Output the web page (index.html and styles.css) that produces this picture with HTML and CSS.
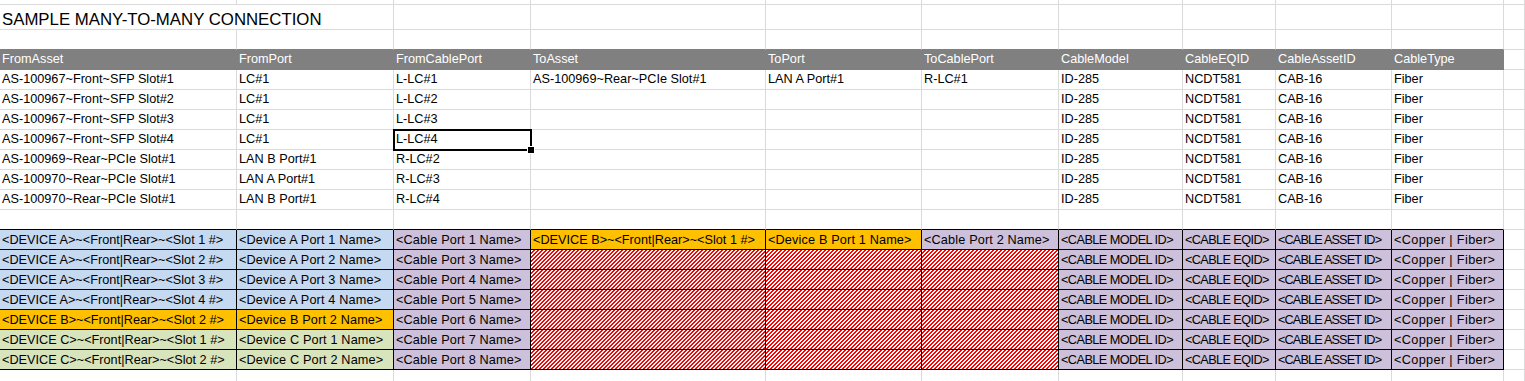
FILE: index.html
```html
<!DOCTYPE html>
<html>
<head>
<meta charset="utf-8">
<title>Sample many-to-many connection</title>
<link rel="stylesheet" href="styles.css">
</head>
<body>
<svg class="defs" width="0" height="0" aria-hidden="true">
  <defs>
    <pattern id="hp" width="4" height="4" patternUnits="userSpaceOnUse">
      <path d="M2 0h2v1H2z M1 1h2v1H1z M0 2h2v1H0z M0 3h1v1H0z M3 3h1v1H3z" fill="#ff0000"/>
    </pattern>
  </defs>
</svg>
<div class="sheet">
  <div class="row r0"><div class="c"></div><div class="c"></div><div class="c"></div><div class="c"></div><div class="c"></div><div class="c"></div><div class="c"></div><div class="c"></div><div class="c"></div><div class="c"></div><div class="c"></div></div>
  <div class="row rt"><div class="c title">SAMPLE MANY-TO-MANY CONNECTION</div><div class="c"></div><div class="c"></div><div class="c"></div><div class="c"></div><div class="c"></div><div class="c"></div><div class="c"></div><div class="c"></div><div class="c"></div></div>
  <div class="row"><div class="c gt"></div><div class="c gt"></div><div class="c gt"></div><div class="c gt"></div><div class="c gt"></div><div class="c gt"></div><div class="c gt"></div><div class="c gt"></div><div class="c gt"></div><div class="c gt"></div><div class="c"></div></div>
  <div class="row">
    <div class="c h">FromAsset</div><div class="c h">FromPort</div><div class="c h">FromCablePort</div><div class="c h">ToAsset</div><div class="c h">ToPort</div><div class="c h">ToCablePort</div><div class="c h">CableModel</div><div class="c h">CableEQID</div><div class="c h">CableAssetID</div><div class="c h">CableType</div><div class="c"></div>
  </div>
  <div class="row">
    <div class="c">AS-100967~Front~SFP Slot#1</div><div class="c">LC#1</div><div class="c">L-LC#1</div><div class="c">AS-100969~Rear~PCIe Slot#1</div><div class="c">LAN A Port#1</div><div class="c">R-LC#1</div><div class="c">ID-285</div><div class="c">NCDT581</div><div class="c">CAB-16</div><div class="c">Fiber</div><div class="c"></div>
  </div>
  <div class="row">
    <div class="c">AS-100967~Front~SFP Slot#2</div><div class="c">LC#1</div><div class="c">L-LC#2</div><div class="c"></div><div class="c"></div><div class="c"></div><div class="c">ID-285</div><div class="c">NCDT581</div><div class="c">CAB-16</div><div class="c">Fiber</div><div class="c"></div>
  </div>
  <div class="row">
    <div class="c">AS-100967~Front~SFP Slot#3</div><div class="c">LC#1</div><div class="c">L-LC#3</div><div class="c"></div><div class="c"></div><div class="c"></div><div class="c">ID-285</div><div class="c">NCDT581</div><div class="c">CAB-16</div><div class="c">Fiber</div><div class="c"></div>
  </div>
  <div class="row">
    <div class="c">AS-100967~Front~SFP Slot#4</div><div class="c">LC#1</div><div class="c sel">L-LC#4<span class="selbox"><span class="handle"></span></span></div><div class="c"></div><div class="c"></div><div class="c"></div><div class="c">ID-285</div><div class="c">NCDT581</div><div class="c">CAB-16</div><div class="c">Fiber</div><div class="c"></div>
  </div>
  <div class="row">
    <div class="c">AS-100969~Rear~PCIe Slot#1</div><div class="c">LAN B Port#1</div><div class="c">R-LC#2</div><div class="c"></div><div class="c"></div><div class="c"></div><div class="c">ID-285</div><div class="c">NCDT581</div><div class="c">CAB-16</div><div class="c">Fiber</div><div class="c"></div>
  </div>
  <div class="row">
    <div class="c">AS-100970~Rear~PCIe Slot#1</div><div class="c">LAN A Port#1</div><div class="c">R-LC#3</div><div class="c"></div><div class="c"></div><div class="c"></div><div class="c">ID-285</div><div class="c">NCDT581</div><div class="c">CAB-16</div><div class="c">Fiber</div><div class="c"></div>
  </div>
  <div class="row">
    <div class="c">AS-100970~Rear~PCIe Slot#1</div><div class="c">LAN B Port#1</div><div class="c">R-LC#4</div><div class="c"></div><div class="c"></div><div class="c"></div><div class="c">ID-285</div><div class="c">NCDT581</div><div class="c">CAB-16</div><div class="c">Fiber</div><div class="c"></div>
  </div>
  <div class="row"><div class="c bt"></div><div class="c bt"></div><div class="c bt"></div><div class="c bt"></div><div class="c bt"></div><div class="c bt"></div><div class="c bt"></div><div class="c bt"></div><div class="c bt"></div><div class="c bt"></div><div class="c"></div></div>
  <div class="row">
    <div class="c bx blue">&lt;DEVICE A&gt;~&lt;Front|Rear&gt;~&lt;Slot 1 #&gt;</div><div class="c bx blue lw">&lt;Device A Port 1 Name&gt;</div><div class="c bx pur lw">&lt;Cable Port 1 Name&gt;</div><div class="c bx yel">&lt;DEVICE B&gt;~&lt;Front|Rear&gt;~&lt;Slot 1 #&gt;</div><div class="c bx yel lw">&lt;Device B Port 1 Name&gt;</div><div class="c bx pur lw">&lt;Cable Port 2 Name&gt;</div><div class="c bx pur lsm">&lt;CABLE MODEL ID&gt;</div><div class="c bx pur lse">&lt;CABLE EQID&gt;</div><div class="c bx pur lsa">&lt;CABLE ASSET ID&gt;</div><div class="c bx pur lsc">&lt;Copper | Fiber&gt;</div><div class="c"></div>
  </div>
  <div class="row">
    <div class="c bx blue">&lt;DEVICE A&gt;~&lt;Front|Rear&gt;~&lt;Slot 2 #&gt;</div><div class="c bx blue lw">&lt;Device A Port 2 Name&gt;</div><div class="c bx pur lw">&lt;Cable Port 3 Name&gt;</div><div class="c bx hatch"><svg class="hs"><rect width="100%" height="100%" fill="url(#hp)"/></svg></div><div class="c bx hatch"><svg class="hs"><rect width="100%" height="100%" fill="url(#hp)"/></svg></div><div class="c bx hatch"><svg class="hs"><rect width="100%" height="100%" fill="url(#hp)"/></svg></div><div class="c bx pur lsm">&lt;CABLE MODEL ID&gt;</div><div class="c bx pur lse">&lt;CABLE EQID&gt;</div><div class="c bx pur lsa">&lt;CABLE ASSET ID&gt;</div><div class="c bx pur lsc">&lt;Copper | Fiber&gt;</div><div class="c"></div>
  </div>
  <div class="row">
    <div class="c bx blue">&lt;DEVICE A&gt;~&lt;Front|Rear&gt;~&lt;Slot 3 #&gt;</div><div class="c bx blue lw">&lt;Device A Port 3 Name&gt;</div><div class="c bx pur lw">&lt;Cable Port 4 Name&gt;</div><div class="c bx hatch"><svg class="hs"><rect width="100%" height="100%" fill="url(#hp)"/></svg></div><div class="c bx hatch"><svg class="hs"><rect width="100%" height="100%" fill="url(#hp)"/></svg></div><div class="c bx hatch"><svg class="hs"><rect width="100%" height="100%" fill="url(#hp)"/></svg></div><div class="c bx pur lsm">&lt;CABLE MODEL ID&gt;</div><div class="c bx pur lse">&lt;CABLE EQID&gt;</div><div class="c bx pur lsa">&lt;CABLE ASSET ID&gt;</div><div class="c bx pur lsc">&lt;Copper | Fiber&gt;</div><div class="c"></div>
  </div>
  <div class="row">
    <div class="c bx blue">&lt;DEVICE A&gt;~&lt;Front|Rear&gt;~&lt;Slot 4 #&gt;</div><div class="c bx blue lw">&lt;Device A Port 4 Name&gt;</div><div class="c bx pur lw">&lt;Cable Port 5 Name&gt;</div><div class="c bx hatch"><svg class="hs"><rect width="100%" height="100%" fill="url(#hp)"/></svg></div><div class="c bx hatch"><svg class="hs"><rect width="100%" height="100%" fill="url(#hp)"/></svg></div><div class="c bx hatch"><svg class="hs"><rect width="100%" height="100%" fill="url(#hp)"/></svg></div><div class="c bx pur lsm">&lt;CABLE MODEL ID&gt;</div><div class="c bx pur lse">&lt;CABLE EQID&gt;</div><div class="c bx pur lsa">&lt;CABLE ASSET ID&gt;</div><div class="c bx pur lsc">&lt;Copper | Fiber&gt;</div><div class="c"></div>
  </div>
  <div class="row">
    <div class="c bx yel">&lt;DEVICE B&gt;~&lt;Front|Rear&gt;~&lt;Slot 2 #&gt;</div><div class="c bx yel lw">&lt;Device B Port 2 Name&gt;</div><div class="c bx pur lw">&lt;Cable Port 6 Name&gt;</div><div class="c bx hatch"><svg class="hs"><rect width="100%" height="100%" fill="url(#hp)"/></svg></div><div class="c bx hatch"><svg class="hs"><rect width="100%" height="100%" fill="url(#hp)"/></svg></div><div class="c bx hatch"><svg class="hs"><rect width="100%" height="100%" fill="url(#hp)"/></svg></div><div class="c bx pur lsm">&lt;CABLE MODEL ID&gt;</div><div class="c bx pur lse">&lt;CABLE EQID&gt;</div><div class="c bx pur lsa">&lt;CABLE ASSET ID&gt;</div><div class="c bx pur lsc">&lt;Copper | Fiber&gt;</div><div class="c"></div>
  </div>
  <div class="row">
    <div class="c bx grn">&lt;DEVICE C&gt;~&lt;Front|Rear&gt;~&lt;Slot 1 #&gt;</div><div class="c bx grn lw">&lt;Device C Port 1 Name&gt;</div><div class="c bx pur lw">&lt;Cable Port 7 Name&gt;</div><div class="c bx hatch"><svg class="hs"><rect width="100%" height="100%" fill="url(#hp)"/></svg></div><div class="c bx hatch"><svg class="hs"><rect width="100%" height="100%" fill="url(#hp)"/></svg></div><div class="c bx hatch"><svg class="hs"><rect width="100%" height="100%" fill="url(#hp)"/></svg></div><div class="c bx pur lsm">&lt;CABLE MODEL ID&gt;</div><div class="c bx pur lse">&lt;CABLE EQID&gt;</div><div class="c bx pur lsa">&lt;CABLE ASSET ID&gt;</div><div class="c bx pur lsc">&lt;Copper | Fiber&gt;</div><div class="c"></div>
  </div>
  <div class="row">
    <div class="c bx grn">&lt;DEVICE C&gt;~&lt;Front|Rear&gt;~&lt;Slot 2 #&gt;</div><div class="c bx grn lw">&lt;Device C Port 2 Name&gt;</div><div class="c bx pur lw">&lt;Cable Port 8 Name&gt;</div><div class="c bx hatch"><svg class="hs"><rect width="100%" height="100%" fill="url(#hp)"/></svg></div><div class="c bx hatch"><svg class="hs"><rect width="100%" height="100%" fill="url(#hp)"/></svg></div><div class="c bx hatch"><svg class="hs"><rect width="100%" height="100%" fill="url(#hp)"/></svg></div><div class="c bx pur lsm">&lt;CABLE MODEL ID&gt;</div><div class="c bx pur lse">&lt;CABLE EQID&gt;</div><div class="c bx pur lsa">&lt;CABLE ASSET ID&gt;</div><div class="c bx pur lsc">&lt;Copper | Fiber&gt;</div><div class="c"></div>
  </div>
  <div class="row"><div class="c"></div><div class="c"></div><div class="c"></div><div class="c"></div><div class="c"></div><div class="c"></div><div class="c"></div><div class="c"></div><div class="c"></div><div class="c"></div><div class="c"></div></div>
</div>
</body>
</html>
```

FILE: styles.css
```css
html, body {
  margin: 0;
  background: #fff;
}
body {
  font-family: "Liberation Sans", Arial, sans-serif;
  font-size: 12.7px;
  color: #000;
}
.defs {
  position: absolute;
  width: 0;
  height: 0;
  overflow: hidden;
}
.sheet {
  width: 1525px;
  height: 381px;
  overflow: hidden;
}
.row {
  display: grid;
  grid-template-columns: 237px 157px 137px 235px 156px 137px 124px 93px 116px 112px 1fr;
  height: 20px;
}
.r0 { height: 5px; }
.rt { height: 25px; }
.c {
  border-right: 1px solid #dadada;
  border-bottom: 1px solid #dadada;
  padding-left: 2px;
  white-space: nowrap;
  overflow: hidden;
  line-height: 19px;
  min-width: 0;
}
.title {
  grid-column: span 2;
  font-size: 16.8px;
  display: flex;
  align-items: flex-end;
  line-height: 19px;
}
.gt { border-bottom-color: #808080; }
.h {
  background: #808080;
  color: #fff;
  border-color: #808080;
}
.bt { border-bottom-color: #000; }
.bx {
  border-color: #000;
  line-height: 21px;
}
.blue { background: #c5d9f1; }
.yel { background: #ffc000; }
.pur { background: #ccc0da; }
.grn { background: #d8e4bc; }
.hatch {
  background: #fff;
  padding-left: 0;
}
.hs {
  display: block;
  width: 100%;
  height: 100%;
  shape-rendering: crispEdges;
}
.lw { letter-spacing: 0.15px; }
.lsm { letter-spacing: -0.55px; }
.lse { letter-spacing: -0.6px; }
.lsa { letter-spacing: -0.85px; }
.lsc { letter-spacing: 0.35px; }
.sel {
  position: relative;
  overflow: visible;
}
.selbox {
  position: absolute;
  left: -1px;
  top: -1px;
  width: 139px;
  height: 22px;
  border: 2px solid #000;
  box-sizing: border-box;
  z-index: 2;
}
.handle {
  position: absolute;
  right: -4px;
  bottom: -4px;
  width: 6px;
  height: 6px;
  background: #000;
  box-shadow: 0 0 0 1px #fff;
}
```
